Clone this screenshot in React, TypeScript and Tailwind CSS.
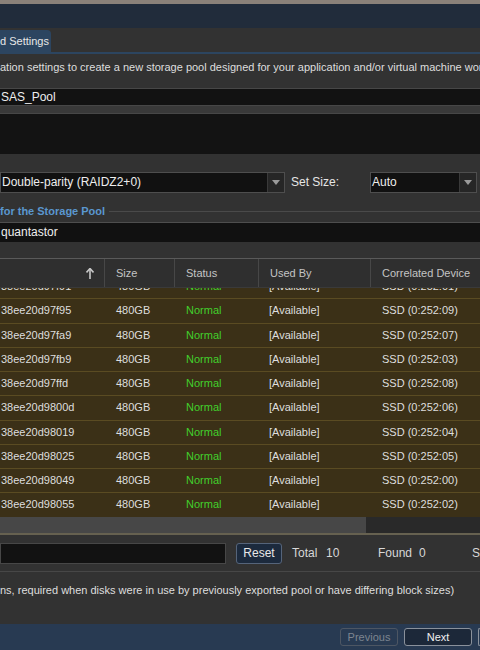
import { ReactNode } from 'react';

const disks = [
  { id: '38ee20d97f91', dev: 'SSD (0:252:01)' },
  { id: '38ee20d97f95', dev: 'SSD (0:252:09)' },
  { id: '38ee20d97fa9', dev: 'SSD (0:252:07)' },
  { id: '38ee20d97fb9', dev: 'SSD (0:252:03)' },
  { id: '38ee20d97ffd', dev: 'SSD (0:252:08)' },
  { id: '38ee20d9800d', dev: 'SSD (0:252:06)' },
  { id: '38ee20d98019', dev: 'SSD (0:252:04)' },
  { id: '38ee20d98025', dev: 'SSD (0:252:05)' },
  { id: '38ee20d98049', dev: 'SSD (0:252:00)' },
  { id: '38ee20d98055', dev: 'SSD (0:252:02)' },
];

function Select({ value, width }: { value: string; width: string }) {
  return (
    <div className={`${width} h-[21px] flex border border-[#4e4e4e] bg-[#111]`}>
      <div className="flex-1 flex items-center pl-[1px] text-[12px] text-[#eee] whitespace-nowrap overflow-hidden">{value}</div>
      <div className="w-[17px] flex items-center justify-center bg-[#262626] border-l border-[#3a3a3a]">
        <svg width="8" height="5" viewBox="0 0 8 5">
          <path d="M0 0 L8 0 L4 5 Z" fill="#9a9a9a" />
        </svg>
      </div>
    </div>
  );
}

function HeadCell({ w, children }: { w: string; children?: ReactNode }) {
  return (
    <div className={`${w} h-full flex items-center pl-[11px] border-r border-[#474747] text-[#c4c4c4] shrink-0`}>
      {children}
    </div>
  );
}

export default function App() {
  return (
    <div className="w-[480px] h-[650px] overflow-hidden bg-[#323232] text-[11px] leading-[13px] text-[#dedede] font-['Liberation_Sans',Arial,sans-serif] flex flex-col">
      {/* window chrome */}
      <div className="h-[4px] bg-[#8a8179] shrink-0" />
      <div className="h-[24px] bg-[#212c3b] shrink-0" />

      {/* tabs */}
      <div className="h-[24px] flex items-end shrink-0">
        <div className="h-[22px] w-[51px] bg-[#2c4560] rounded-tr-[4px] flex items-center text-[#e8e8e8] whitespace-nowrap overflow-hidden">
          d Settings
        </div>
      </div>
      <div className="h-[2px] bg-[#2c4560] shrink-0" />

      <div className="h-[34px] pt-[7px] whitespace-nowrap overflow-hidden shrink-0">
        ation settings to create a new storage pool designed for your application and/or virtual machine workloads.
      </div>

      {/* name */}
      <div className="h-[18px] bg-[#121212] border-y border-[#474747] flex items-center pl-[1px] text-[12px] text-[#eee] shrink-0">SAS_Pool</div>
      <div className="h-[7px] bg-[#393939] shrink-0" />
      <div className="h-[41px] bg-[#131313] border-t border-[#474747] shrink-0" />
      <div className="h-[18px] shrink-0" />

      {/* layout */}
      <div className="h-[21px] flex items-center shrink-0">
        <Select value="Double-parity (RAIDZ2+0)" width="w-[285px]" />
        <div className="w-[85px] pl-[6px] text-[12px] text-[#e6e6e6]">Set Size:</div>
        <Select value="Auto" width="w-[107px]" />
      </div>
      <div className="h-[7px] shrink-0" />

      {/* fieldset */}
      <div className="h-[22px] flex items-center shrink-0">
        <span className="font-bold text-[#5a97cf] whitespace-nowrap">for the Storage Pool</span>
        <div className="flex-1 h-px bg-[#4a4a4a] ml-[4px]" />
      </div>
      <div className="h-[20px] bg-[#111] border-t border-[#4e4e4e] flex items-center pl-[1px] text-[12px] text-[#eee] shrink-0">quantastor</div>
      <div className="h-[16px] shrink-0" />

      {/* table header */}
      <div className="h-[30px] flex border-t border-[#5a5a5a] border-b border-b-[#3a3a3a] bg-[#2f2f2f] shrink-0">
        <HeadCell w="w-[105px]">
          <div className="flex-1 flex justify-end pr-[10px]">
            <svg width="8" height="11" viewBox="0 0 8 11">
              <path d="M4 1 V11" stroke="#c8c8c8" strokeWidth="1.6" />
              <path d="M0.5 4.5 L4 0.5 L7.5 4.5" stroke="#c8c8c8" strokeWidth="1.6" fill="none" />
            </svg>
          </div>
        </HeadCell>
        <HeadCell w="w-[70px]">Size</HeadCell>
        <HeadCell w="w-[84px]">Status</HeadCell>
        <HeadCell w="w-[112px]">Used By</HeadCell>
        <div className="flex-1 flex items-center pl-[11px] text-[#c4c4c4] whitespace-nowrap">Correlated Device</div>
      </div>

      {/* rows, scrolled a little */}
      <div className="h-[229px] overflow-hidden shrink-0">
        <div className="mt-[-13px]">
          {disks.map(d => (
            <div key={d.id} className="h-[24.25px] flex items-center bg-[#3b3017] border-b border-[#5a4b22] whitespace-nowrap">
              <div className="w-[105px] pl-[1px]">{d.id}</div>
              <div className="w-[70px] pl-[11px]">480GB</div>
              <div className="w-[84px] pl-[11px] text-[#42cf2c]">Normal</div>
              <div className="w-[112px] pl-[10px]">[Available]</div>
              <div className="flex-1 pl-[11px]">{d.dev}</div>
            </div>
          ))}
        </div>
      </div>

      {/* horizontal scrollbar */}
      <div className="h-[16px] flex shrink-0">
        <div className="w-[366px] bg-[#474747]" />
        <div className="flex-1 bg-[#292929]" />
      </div>
      <div className="h-[2px] bg-[#666150] shrink-0" />

      {/* search toolbar */}
      <div className="h-[36px] flex items-center shrink-0 whitespace-nowrap text-[12px] text-[#d8d8d8]">
        <div className="w-[226px] h-[21px] bg-[#121212] border border-[#474747]" />
        <button className="ml-[10px] w-[46px] h-[21px] bg-[#1c2a3d] border border-[#55647a] rounded-[3px] text-[12px] text-[#e8e8e8]">Reset</button>
        <span className="ml-[10px] w-[34px]">Total</span>
        <span className="w-[52px]">10</span>
        <span className="w-[41px]">Found</span>
        <span className="w-[53px]">0</span>
        <span>S</span>
      </div>
      <div className="h-px bg-[#474747] shrink-0" />

      <div className="h-[52px] pt-[12px] whitespace-nowrap overflow-hidden shrink-0">
        ns, required when disks were in use by previously exported pool or have differing block sizes)
      </div>

      {/* footer */}
      <div className="flex-1 bg-[#283a52] flex items-center justify-end gap-[6px]">
        <button className="w-[58px] h-[18px] border border-[#4d5663] rounded-[3px] text-[#7d8590] text-[11px]">Previous</button>
        <button className="w-[68px] h-[18px] border border-[#8a919b] bg-[#1c2839] rounded-[3px] text-[#f0f0f0] text-[11px]">Next</button>
        <div className="w-[2px] h-[18px] border-l border-y border-[#8a919b] rounded-l-[3px]" />
      </div>
    </div>
  );
}
